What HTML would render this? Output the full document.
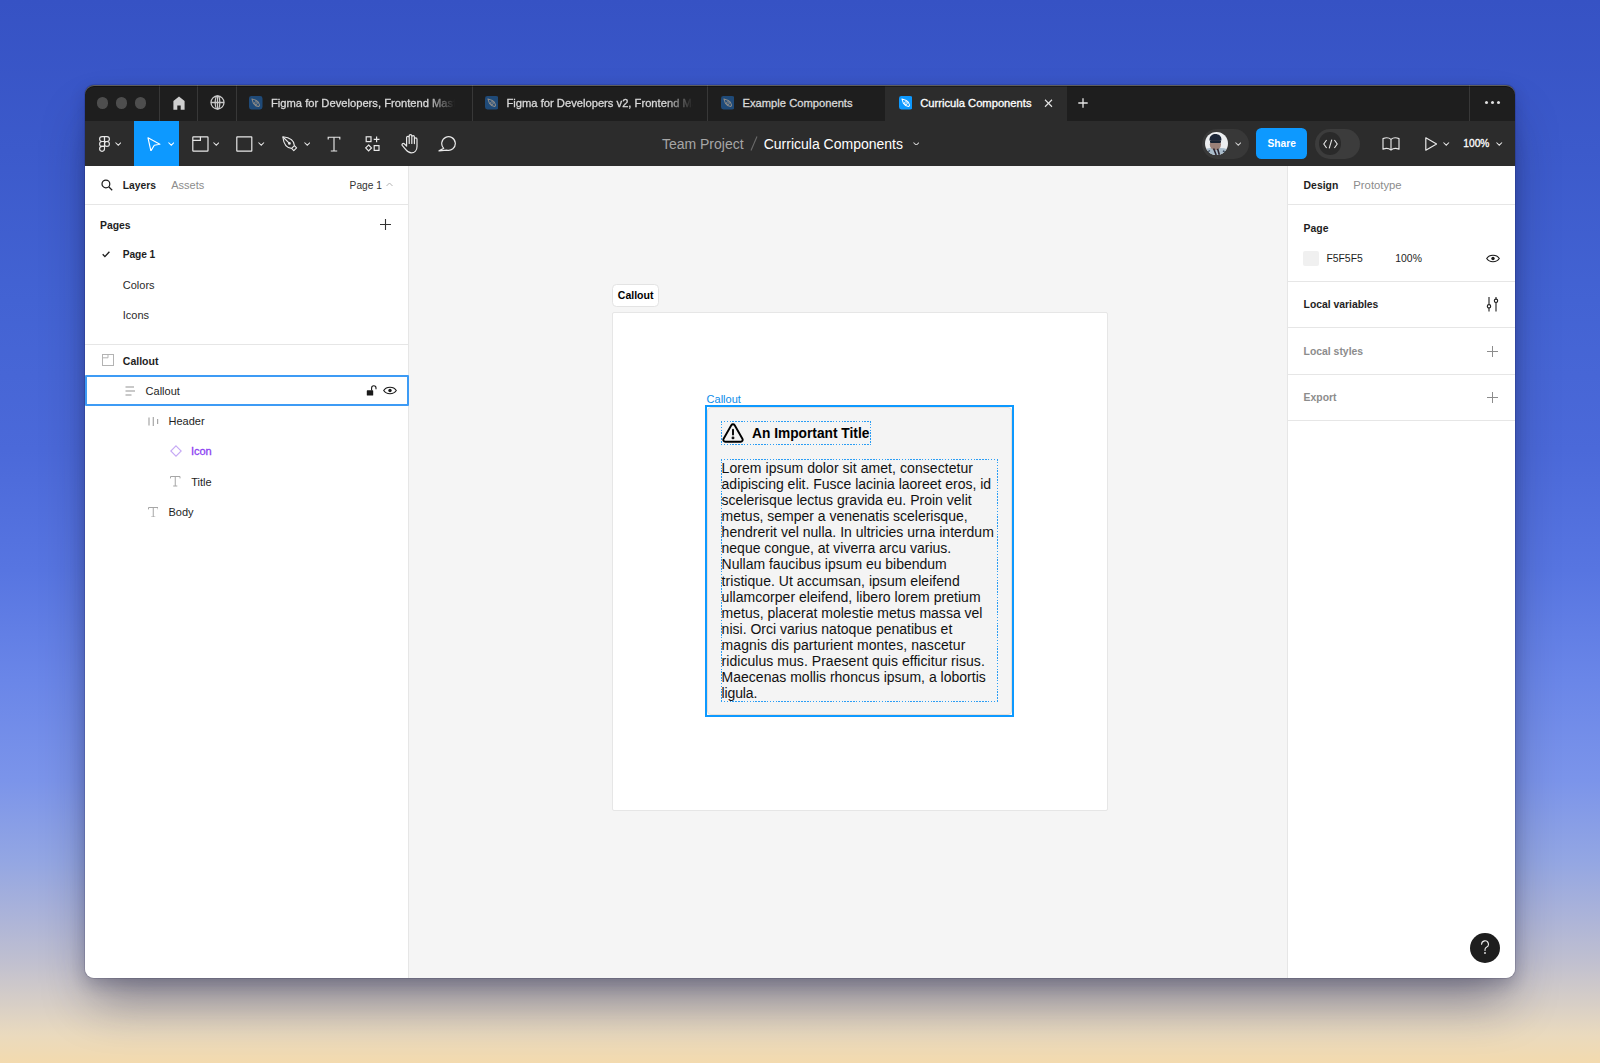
<!DOCTYPE html>
<html><head><meta charset="utf-8"><title>Figma</title>
<style>
html,body{margin:0;padding:0;width:1600px;height:1063px;overflow:hidden}
body{position:relative;font-family:"Liberation Sans",sans-serif;
background:linear-gradient(180deg,#3652c4 0px,#3c5acb 150px,#4363d3 300px,#4b69d9 450px,#5775e1 570px,#6a86e8 680px,#7b94ea 780px,#93a6e3 860px,#abb3d9 915px,#bfbfd0 960px,#d8cfc6 1005px,#eadabe 1035px,#f3daae 1063px)}
.abs{position:absolute;box-sizing:content-box}
.t{position:absolute;white-space:nowrap}
.fade{-webkit-mask-image:linear-gradient(90deg,#000 85%,transparent 100%);mask-image:linear-gradient(90deg,#000 85%,transparent 100%)}
#win{position:absolute;left:85px;top:85px;width:1430px;height:893px;border-radius:9px;overflow:hidden}
#hl{position:absolute;left:85px;top:85px;width:1430px;height:893px;border-radius:9px;box-shadow:inset 0 1px 0 rgba(255,255,255,0.32),inset 0 2px 0 rgba(0,0,0,0.35)}
#shadow{position:absolute;left:85px;top:85px;width:1430px;height:893px;border-radius:9px;box-shadow:0 0 0 1px rgba(0,0,40,0.12),0 6px 16px rgba(20,20,50,0.2),0 30px 50px -8px rgba(20,20,50,0.4)}
</style></head>
<body>
<div id="shadow"></div>
<div id="win"><div style="position:absolute;left:-85px;top:-85px;width:1600px;height:1063px">
<div class="abs" style="left:85px;top:85px;width:1430px;height:36px;background:#1e1e1e"></div>
<div class="abs" style="left:96.75px;top:97.05px;width:11.5px;height:11.5px;border-radius:50%;background:#4e4e4e"></div>
<div class="abs" style="left:115.55px;top:97.05px;width:11.5px;height:11.5px;border-radius:50%;background:#4e4e4e"></div>
<div class="abs" style="left:134.55px;top:97.05px;width:11.5px;height:11.5px;border-radius:50%;background:#4e4e4e"></div>
<div class="abs" style="left:159px;top:85px;width:1px;height:36px;background:#383838"></div>
<div class="abs" style="left:197px;top:85px;width:1px;height:36px;background:#383838"></div>
<div class="abs" style="left:236px;top:85px;width:1px;height:36px;background:#383838"></div>
<div class="abs" style="left:471.5px;top:85px;width:1px;height:36px;background:#383838"></div>
<div class="abs" style="left:707px;top:85px;width:1px;height:36px;background:#383838"></div>
<div class="abs" style="left:1469px;top:85px;width:1px;height:36px;background:#383838"></div>
<div class="abs" style="left:885px;top:86px;width:182px;height:35px;background:#2c2c2c"></div>
<svg class="abs" style="left:172.5px;top:96px" width="12" height="14" viewBox="0 0 12 14"><path d="M6 0.4 L11.6 5.0 V13.8 H7.7 V9.4 H4.3 V13.8 H0.4 V5.0 Z" fill="#cfcfcf"/></svg>
<svg class="abs" style="left:209.6px;top:95.4px" width="15" height="15" viewBox="0 0 15 15" fill="none" stroke="#c8c8c8" stroke-width="1.3"><circle cx="7.5" cy="7.5" r="6.5"/><ellipse cx="7.5" cy="7.5" rx="2.3" ry="6.5"/><line x1="0.9" y1="7.5" x2="14.1" y2="7.5"/><line x1="7.5" y1="0.9" x2="7.5" y2="14.1"/></svg>
<svg class="abs" style="left:249px;top:96px" width="13.5" height="13.5" viewBox="0 0 14 14"><rect width="14" height="14" rx="2.5" fill="#1f4a78"/><path d="M3.0 3.0 L7.6 4.6 C9.4 5.4 10.6 7.2 11.0 9.6 L10.0 11.0 C7.6 10.6 5.6 9.4 4.6 7.6 Z" fill="none" stroke="#8e8c88" stroke-width="1.05" stroke-linejoin="round"/><circle cx="7.2" cy="7.4" r="1.5" fill="none" stroke="#8e8c88" stroke-width="0.9"/><circle cx="7.2" cy="7.4" r="0.5" fill="#8e8c88"/></svg>
<svg class="abs" style="left:484.5px;top:96px" width="13.5" height="13.5" viewBox="0 0 14 14"><rect width="14" height="14" rx="2.5" fill="#1f4a78"/><path d="M3.0 3.0 L7.6 4.6 C9.4 5.4 10.6 7.2 11.0 9.6 L10.0 11.0 C7.6 10.6 5.6 9.4 4.6 7.6 Z" fill="none" stroke="#8e8c88" stroke-width="1.05" stroke-linejoin="round"/><circle cx="7.2" cy="7.4" r="1.5" fill="none" stroke="#8e8c88" stroke-width="0.9"/><circle cx="7.2" cy="7.4" r="0.5" fill="#8e8c88"/></svg>
<svg class="abs" style="left:720.5px;top:96px" width="13.5" height="13.5" viewBox="0 0 14 14"><rect width="14" height="14" rx="2.5" fill="#1f4a78"/><path d="M3.0 3.0 L7.6 4.6 C9.4 5.4 10.6 7.2 11.0 9.6 L10.0 11.0 C7.6 10.6 5.6 9.4 4.6 7.6 Z" fill="none" stroke="#8e8c88" stroke-width="1.05" stroke-linejoin="round"/><circle cx="7.2" cy="7.4" r="1.5" fill="none" stroke="#8e8c88" stroke-width="0.9"/><circle cx="7.2" cy="7.4" r="0.5" fill="#8e8c88"/></svg>
<svg class="abs" style="left:898.5px;top:96px" width="13.5" height="13.5" viewBox="0 0 14 14"><rect width="14" height="14" rx="2.5" fill="#0d99ff"/><path d="M3.0 3.0 L7.6 4.6 C9.4 5.4 10.6 7.2 11.0 9.6 L10.0 11.0 C7.6 10.6 5.6 9.4 4.6 7.6 Z" fill="none" stroke="#ffffff" stroke-width="1.05" stroke-linejoin="round"/><circle cx="7.2" cy="7.4" r="1.5" fill="none" stroke="#ffffff" stroke-width="0.9"/><circle cx="7.2" cy="7.4" r="0.5" fill="#ffffff"/></svg>
<div class="abs fade" style="left:271px;top:94px;width:184px;height:18px;overflow:hidden"><div class="t" style="left:0px;top:4.32px;font-size:11.2px;line-height:11.2px;color:#d9d9d9;font-weight:400;-webkit-text-stroke:0.3px currentColor">Figma for Developers, Frontend Masters</div></div>
<div class="abs fade" style="left:506.5px;top:94px;width:186px;height:18px;overflow:hidden"><div class="t" style="left:0px;top:4.32px;font-size:11.2px;line-height:11.2px;color:#d9d9d9;font-weight:400;-webkit-text-stroke:0.3px currentColor">Figma for Developers v2, Frontend Masters</div></div>
<div class="t" style="left:742.5px;top:98.32px;font-size:11.2px;line-height:11.2px;color:#d9d9d9;font-weight:400;-webkit-text-stroke:0.3px currentColor">Example Components</div>
<div class="t" style="left:920.2px;top:98.32px;font-size:11.2px;line-height:11.2px;color:#ffffff;font-weight:400;-webkit-text-stroke:0.3px currentColor">Curricula Components</div>
<svg class="abs" style="left:1043.5px;top:99px" width="9" height="8.5" viewBox="0 0 9 9" stroke="#e6e6e6" stroke-width="1.2"><line x1="0.8" y1="0.8" x2="8.2" y2="8.2"/><line x1="8.2" y1="0.8" x2="0.8" y2="8.2"/></svg>
<svg class="abs" style="left:1077.5px;top:98px" width="10" height="10" viewBox="0 0 10 10" stroke="#e6e6e6" stroke-width="1.3"><line x1="5" y1="0.3" x2="5" y2="9.7"/><line x1="0.3" y1="5" x2="9.7" y2="5"/></svg>
<div class="abs" style="left:1485.1000000000001px;top:101.2px;width:3.2px;height:3.2px;border-radius:50%;background:#e0e0e0"></div>
<div class="abs" style="left:1490.8000000000002px;top:101.2px;width:3.2px;height:3.2px;border-radius:50%;background:#e0e0e0"></div>
<div class="abs" style="left:1496.6000000000001px;top:101.2px;width:3.2px;height:3.2px;border-radius:50%;background:#e0e0e0"></div>
<div class="abs" style="left:85px;top:121px;width:1430px;height:45px;background:#2c2c2c"></div>
<div class="abs" style="left:134px;top:121px;width:45px;height:45px;background:#0d99ff"></div>
<svg class="abs" style="left:99.2px;top:135.6px" width="11" height="16" viewBox="0 0 11 16" fill="none" stroke="#e8e8e8" stroke-width="1.15"><path d="M3.05 0.6 H5.5 V5.5 H3.05 A2.45 2.45 0 0 1 3.05 0.6 Z"/><path d="M5.5 0.6 H7.95 A2.45 2.45 0 0 1 7.95 5.5 H5.5 Z"/><path d="M3.05 5.5 H5.5 V10.4 H3.05 A2.45 2.45 0 0 1 3.05 5.5 Z"/><circle cx="7.95" cy="7.95" r="2.45"/><path d="M5.5 10.4 V12.85 A2.45 2.45 0 1 1 3.05 10.4 Z"/></svg>
<svg class="abs" style="left:114.75px;top:142px" width="6.5" height="3.8" viewBox="0 0 7 4" fill="none" stroke="#e6e6e6" stroke-width="1.1"><path d="M0.5 0.5 L3.5 3.4 L6.5 0.5"/></svg>
<svg class="abs" style="left:147px;top:136.5px" width="14" height="14" viewBox="0 0 14 14" fill="none" stroke="#ffffff" stroke-width="1.15" stroke-linejoin="round"><path d="M1.0 0.8 L12.9 7.3 L7.3 8.3 L3.9 13.9 Z"/></svg>
<svg class="abs" style="left:167.5px;top:142px" width="6.5" height="3.8" viewBox="0 0 7 4" fill="none" stroke="#ffffff" stroke-width="1.1"><path d="M0.5 0.5 L3.5 3.4 L6.5 0.5"/></svg>
<svg class="abs" style="left:191.5px;top:135.5px" width="17" height="16" viewBox="0 0 17 16" fill="none" stroke="#e8e8e8" stroke-width="1.2"><rect x="0.8" y="0.8" width="15.2" height="14.4" rx="0.6"/><path d="M0.8 4.3 H8.4 V0.8"/></svg>
<svg class="abs" style="left:212.75px;top:142px" width="6.5" height="3.8" viewBox="0 0 7 4" fill="none" stroke="#e6e6e6" stroke-width="1.1"><path d="M0.5 0.5 L3.5 3.4 L6.5 0.5"/></svg>
<svg class="abs" style="left:236px;top:135.5px" width="17" height="16" viewBox="0 0 17 16" fill="none" stroke="#e8e8e8" stroke-width="1.2"><rect x="0.8" y="0.8" width="15" height="14.4" rx="0.4"/></svg>
<svg class="abs" style="left:258.25px;top:142px" width="6.5" height="3.8" viewBox="0 0 7 4" fill="none" stroke="#e6e6e6" stroke-width="1.1"><path d="M0.5 0.5 L3.5 3.4 L6.5 0.5"/></svg>
<svg class="abs" style="left:281.5px;top:135.5px" width="16" height="16" viewBox="0 0 16 16" fill="none" stroke="#e8e8e8" stroke-width="1.15" stroke-linejoin="round"><path d="M0.8 0.8 C7.4 1.6 12.2 4.0 12.4 9.6 L9.6 12.4 C4.0 12.2 1.6 7.4 0.8 0.8 Z"/><path d="M12.4 9.6 L14.6 11.8 L11.8 14.6 L9.6 12.4"/><path d="M1 1 L7.2 7.2"/><circle cx="7.4" cy="7.4" r="1.35" fill="#e8e8e8" stroke="none"/></svg>
<svg class="abs" style="left:303.75px;top:142px" width="6.5" height="3.8" viewBox="0 0 7 4" fill="none" stroke="#e6e6e6" stroke-width="1.1"><path d="M0.5 0.5 L3.5 3.4 L6.5 0.5"/></svg>
<svg class="abs" style="left:327px;top:135.5px" width="14" height="16" viewBox="0 0 14 16" fill="none" stroke="#e8e8e8" stroke-width="1.15"><path d="M1.2 3.6 V1.2 H12.8 V3.6"/><path d="M7 1.2 V15"/><path d="M3.8 15 H10.2"/></svg>
<svg class="abs" style="left:364.5px;top:135.5px" width="16" height="16" viewBox="0 0 16 16" fill="none" stroke="#e8e8e8" stroke-width="1.2"><rect x="1.2" y="0.8" width="4.8" height="4.8"/><path d="M11.6 0.4 V6.2 M8.7 3.3 H14.5"/><path d="M3.6 9.0 L6.5 11.9 L3.6 14.8 L0.7 11.9 Z"/><rect x="9.2" y="9.6" width="4.8" height="4.8"/></svg>
<svg class="abs" style="left:400.5px;top:133.5px" width="19" height="20" viewBox="0 0 19 20" fill="none" stroke="#e8e8e8" stroke-width="1.2" stroke-linejoin="round" stroke-linecap="round"><path d="M5.6 11.2 V3.6 A1.3 1.3 0 0 1 8.2 3.6 V9.4 M8.2 9.4 V1.9 A1.3 1.3 0 0 1 10.8 1.9 V9.4 M10.8 9.4 V3.0 A1.3 1.3 0 0 1 13.4 3.0 V9.6 M13.4 9.6 V5.2 A1.3 1.3 0 0 1 16.0 5.2 V12.4 C16.0 16.4 13.6 18.8 10.4 18.8 C7.6 18.8 6.2 17.4 4.8 15.6 L1.2 11.4 A1.3 1.3 0 0 1 3.2 9.8 L5.6 12.0"/></svg>
<svg class="abs" style="left:438px;top:135.5px" width="18" height="16" viewBox="0 0 18 16" fill="none" stroke="#e8e8e8" stroke-width="1.2" stroke-linejoin="round"><path d="M5.7 12.3 A6.8 6.8 0 1 1 8.74 14.07 L1.0 14.9 Z"/></svg>
<div class="t" style="left:661.9px;top:136.75px;font-size:14px;line-height:14px;color:#a6a6a6;font-weight:400;">Team Project</div>
<svg class="abs" style="left:749.5px;top:136px" width="8" height="15" viewBox="0 0 8 15" stroke="#6a6a6a" stroke-width="1.1"><line x1="7" y1="0.5" x2="1" y2="14.5"/></svg>
<div class="t" style="left:763.7px;top:136.75px;font-size:14px;line-height:14px;color:#ffffff;font-weight:400;">Curricula Components</div>
<svg class="abs" style="left:912.5px;top:141.6px" width="6.5" height="3.8" viewBox="0 0 7 4" fill="none" stroke="#d0d0d0" stroke-width="1.1"><path d="M0.5 0.5 L3.5 3.4 L6.5 0.5"/></svg>
<div class="abs" style="left:1202px;top:128.5px;width:46.5px;height:30px;border-radius:15px;background:#383838"></div>
<svg class="abs" style="left:1204.9px;top:131.9px" width="23" height="23" viewBox="0 0 23 23"><defs><clipPath id="av"><circle cx="11.5" cy="11.5" r="11.5"/></clipPath></defs><g clip-path="url(#av)"><rect width="23" height="23" fill="#eceef0"/><path d="M0 23 L1 17 C4 15.5 8 15.8 11 16.5 C15 15.8 19 16 23 17.5 V23Z" fill="#a9bccb"/><ellipse cx="10.4" cy="12.4" rx="5.6" ry="5.8" fill="#9c8078"/><path d="M4.4 8.4 C4.2 3.8 7.8 2.0 10.4 2.0 C13.6 2.0 16.8 4.0 16.4 8.4 Z" fill="#1c2638"/><rect x="5" y="8.2" width="11" height="2.8" rx="1.2" fill="#1a2232"/><path d="M8.6 16.5 L11.2 23 M12.6 16.8 L14.4 23" stroke="#2c2430" stroke-width="1.6"/><path d="M1 21 L5 18.5 M18 19 L22 21" stroke="#3b4a5e" stroke-width="1.4"/></g></svg>
<svg class="abs" style="left:1234.75px;top:142px" width="6.5" height="3.8" viewBox="0 0 7 4" fill="none" stroke="#d0d0d0" stroke-width="1.1"><path d="M0.5 0.5 L3.5 3.4 L6.5 0.5"/></svg>
<div class="abs" style="left:1256px;top:128px;width:51px;height:30.5px;border-radius:5.5px;background:#0d99ff"></div>
<div class="t" style="left:1267.5px;top:139.37px;font-size:10.2px;line-height:10.2px;color:#ffffff;font-weight:700;">Share</div>
<div class="abs" style="left:1315px;top:128.5px;width:45px;height:30px;border-radius:15px;background:#3c3c3c"></div>
<div class="abs" style="left:1318.75px;top:132.25px;width:22.5px;height:22.5px;border-radius:50%;background:#2a2a2a"></div>
<svg class="abs" style="left:1322.5px;top:138.5px" width="15" height="10" viewBox="0 0 15 10" fill="none" stroke="#e6e6e6" stroke-width="1.1"><path d="M3.6 1 L0.8 5 L3.6 9"/><path d="M11.4 1 L14.2 5 L11.4 9"/><path d="M8.8 0.6 L6.2 9.4"/></svg>
<svg class="abs" style="left:1381.5px;top:136.5px" width="18" height="14" viewBox="0 0 18 14" fill="none" stroke="#e8e8e8" stroke-width="1.15" stroke-linejoin="round"><path d="M9 2.4 C7 0.6 3.4 0.6 1 1.6 V12.2 C3.4 11.2 7 11.4 9 13 C11 11.4 14.6 11.2 17 12.2 V1.6 C14.6 0.6 11 0.6 9 2.4 Z"/><path d="M9 2.4 V13"/></svg>
<svg class="abs" style="left:1424.5px;top:136.5px" width="12.5" height="14" viewBox="0 0 12.5 14" fill="none" stroke="#e8e8e8" stroke-width="1.2" stroke-linejoin="round"><path d="M0.8 0.8 L11.6 7 L0.8 13.2 Z"/></svg>
<svg class="abs" style="left:1443px;top:141.8px" width="6.5" height="3.8" viewBox="0 0 7 4" fill="none" stroke="#e6e6e6" stroke-width="1.1"><path d="M0.5 0.5 L3.5 3.4 L6.5 0.5"/></svg>
<div class="t" style="left:1463.3px;top:139.47px;font-size:10.2px;line-height:10.2px;color:#ffffff;font-weight:400;-webkit-text-stroke:0.3px currentColor">100%</div>
<svg class="abs" style="left:1496px;top:141.8px" width="6.5" height="3.8" viewBox="0 0 7 4" fill="none" stroke="#e6e6e6" stroke-width="1.1"><path d="M0.5 0.5 L3.5 3.4 L6.5 0.5"/></svg>
<div class="abs" style="left:85px;top:166px;width:323px;height:812px;background:#ffffff"></div>
<div class="abs" style="left:408px;top:166px;width:1px;height:812px;background:#e6e6e6"></div>
<div class="abs" style="left:85px;top:204px;width:323px;height:1px;background:#e6e6e6"></div>
<div class="abs" style="left:85px;top:344px;width:323px;height:1px;background:#e6e6e6"></div>
<svg class="abs" style="left:101px;top:179px" width="12" height="12" viewBox="0 0 12 12" fill="none" stroke="#1e1e1e" stroke-width="1.25"><circle cx="4.9" cy="4.9" r="3.9"/><line x1="7.7" y1="7.7" x2="11.2" y2="11.2"/></svg>
<div class="t" style="left:122.8px;top:181.08px;font-size:10.3px;line-height:10.3px;color:#1e1e1e;font-weight:700;">Layers</div>
<div class="t" style="left:171.2px;top:180.49px;font-size:11px;line-height:11px;color:#8c8c8c;font-weight:400;">Assets</div>
<div class="t" style="left:349.6px;top:181.17px;font-size:10.2px;line-height:10.2px;color:#333333;font-weight:400;">Page 1</div>
<svg class="abs" style="left:385.5px;top:181.7px" width="7" height="4.5" viewBox="0 0 7 4.5" fill="none" stroke="#b3b3b3" stroke-width="1"><path d="M0.5 4 L3.5 1 L6.5 4"/></svg>
<div class="t" style="left:100px;top:220.50px;font-size:10.4px;line-height:10.4px;color:#1e1e1e;font-weight:700;">Pages</div>
<svg class="abs" style="left:380px;top:218.5px" width="11" height="11" viewBox="0 0 11 11" stroke="#333" stroke-width="1.1"><line x1="5.5" y1="0" x2="5.5" y2="11"/><line x1="0" y1="5.5" x2="11" y2="5.5"/></svg>
<svg class="abs" style="left:101.5px;top:251px" width="8" height="6.5" viewBox="0 0 8 6.5" fill="none" stroke="#1e1e1e" stroke-width="1.35"><path d="M0.7 3.3 L2.9 5.6 L7.4 0.8"/></svg>
<div class="t" style="left:122.8px;top:250.17px;font-size:10.2px;line-height:10.2px;color:#1e1e1e;font-weight:700;letter-spacing:-0.1px">Page 1</div>
<div class="t" style="left:122.8px;top:279.79px;font-size:11px;line-height:11px;color:#2a2a2a;font-weight:400;">Colors</div>
<div class="t" style="left:122.8px;top:310.19px;font-size:11px;line-height:11px;color:#2a2a2a;font-weight:400;">Icons</div>
<svg class="abs" style="left:101.5px;top:354px" width="12" height="12" viewBox="0 0 12 12" fill="none" stroke="#b3b3b3" stroke-width="1"><rect x="0.5" y="0.5" width="11" height="11"/><path d="M0.5 3.8 H6 V0.5"/></svg>
<div class="t" style="left:122.8px;top:355.71px;font-size:10.5px;line-height:10.5px;color:#1e1e1e;font-weight:700;">Callout</div>
<div class="abs" style="left:85px;top:375px;width:319.5px;height:27px;border:2px solid #3d9bf5;border-radius:1px"></div>
<svg class="abs" style="left:124.5px;top:385.5px" width="10.5" height="10" viewBox="0 0 10.5 10" stroke="#a6a6a6" stroke-width="1.2"><line x1="0.5" y1="1" x2="9" y2="1"/><line x1="0.5" y1="5" x2="10" y2="5"/><line x1="0.5" y1="9" x2="6.5" y2="9"/></svg>
<div class="t" style="left:145.6px;top:385.89px;font-size:11px;line-height:11px;color:#1e1e1e;font-weight:400;">Callout</div>
<svg class="abs" style="left:366px;top:384.5px" width="11" height="11" viewBox="0 0 11 11"><rect x="0.8" y="5.3" width="6.4" height="5.3" rx="0.6" fill="#1a1a1a"/><path d="M5.6 5.4 V3.0 A2.2 2.2 0 0 1 10 3.0 V4.2" fill="none" stroke="#1a1a1a" stroke-width="1.1"/></svg>
<svg class="abs" style="left:382.5px;top:386px" width="14" height="9" viewBox="0 0 14 9"><path d="M0.7 4.5 C3.4 0.2 10.6 0.2 13.3 4.5 C10.6 8.8 3.4 8.8 0.7 4.5 Z" fill="none" stroke="#1a1a1a" stroke-width="1.1"/><circle cx="7" cy="4.5" r="1.7" fill="#1a1a1a"/></svg>
<svg class="abs" style="left:147.5px;top:416.5px" width="11" height="9" viewBox="0 0 11 9" stroke="#a6a6a6" stroke-width="1.2"><line x1="1" y1="0.5" x2="1" y2="8.5"/><line x1="5.3" y1="0" x2="5.3" y2="9"/><line x1="9.6" y1="2" x2="9.6" y2="7"/></svg>
<div class="t" style="left:168.5px;top:416.49px;font-size:11px;line-height:11px;color:#1e1e1e;font-weight:400;">Header</div>
<svg class="abs" style="left:169.5px;top:445px" width="12" height="12" viewBox="0 0 12 12" fill="none" stroke="#c5a8f5" stroke-width="1.1"><path d="M6 0.8 L11.2 6 L6 11.2 L0.8 6 Z"/></svg>
<div class="t" style="left:190.9px;top:446.49px;font-size:11px;line-height:11px;color:#8b3ef2;font-weight:400;-webkit-text-stroke:0.3px currentColor">Icon</div>
<svg class="abs" style="left:170px;top:476px" width="10.5" height="10.5" viewBox="0 0 10.5 10.5" fill="none" stroke="#a6a6a6" stroke-width="1"><path d="M0.5 2.4 V0.5 H10 V2.4 M5.25 0.5 V10 M3.2 10 H7.3"/></svg>
<div class="t" style="left:191.2px;top:476.99px;font-size:11px;line-height:11px;color:#1e1e1e;font-weight:400;">Title</div>
<svg class="abs" style="left:147.7px;top:506.5px" width="10.5" height="10.5" viewBox="0 0 10.5 10.5" fill="none" stroke="#a6a6a6" stroke-width="1"><path d="M0.5 2.4 V0.5 H10 V2.4 M5.25 0.5 V10 M3.2 10 H7.3"/></svg>
<div class="t" style="left:168.5px;top:507.29px;font-size:11px;line-height:11px;color:#1e1e1e;font-weight:400;">Body</div>
<div class="abs" style="left:409px;top:166px;width:878px;height:812px;background:#f5f5f5"></div>
<div class="abs" style="left:612px;top:283.5px;width:45px;height:21.5px;border:1px solid #e3e3e3;border-radius:4.5px;background:#ffffff"></div>
<div class="t" style="left:617.8px;top:289.91px;font-size:10.5px;line-height:10.5px;color:#000000;font-weight:700;">Callout</div>
<div class="abs" style="left:612px;top:312px;width:494px;height:497px;border:1px solid #e6e6e6;border-radius:2px;background:#ffffff"></div>
<div class="t" style="left:706.6px;top:393.69px;font-size:11px;line-height:11px;color:#0c8ce9;font-weight:400;">Callout</div>
<div class="abs" style="left:707px;top:407px;width:303px;height:306px;border:1px solid #e8e0d8;border-radius:4px;background:#f4f4f4"></div>
<div class="abs" style="left:705px;top:405px;width:305px;height:308px;border:2px solid #0d99ff"></div>
<div class="abs" style="left:721px;top:421px;width:149.5px;height:1px;background:repeating-linear-gradient(90deg,#2a9df4 0 1.5px,transparent 1.5px 2.87px)"></div>
<div class="abs" style="left:721px;top:443.5px;width:149.5px;height:1px;background:repeating-linear-gradient(90deg,#2a9df4 0 1.5px,transparent 1.5px 2.87px)"></div>
<div class="abs" style="left:721px;top:421px;width:1px;height:23.5px;background:repeating-linear-gradient(180deg,#2a9df4 0 1.5px,transparent 1.5px 2.87px)"></div>
<div class="abs" style="left:869.5px;top:421px;width:1px;height:23.5px;background:repeating-linear-gradient(180deg,#2a9df4 0 1.5px,transparent 1.5px 2.87px)"></div>
<div class="abs" style="left:721px;top:459px;width:277px;height:1px;background:repeating-linear-gradient(90deg,#2a9df4 0 1.5px,transparent 1.5px 2.87px)"></div>
<div class="abs" style="left:721px;top:700.5px;width:277px;height:1px;background:repeating-linear-gradient(90deg,#2a9df4 0 1.5px,transparent 1.5px 2.87px)"></div>
<div class="abs" style="left:721px;top:459px;width:1px;height:242.5px;background:repeating-linear-gradient(180deg,#2a9df4 0 1.5px,transparent 1.5px 2.87px)"></div>
<div class="abs" style="left:997px;top:459px;width:1px;height:242.5px;background:repeating-linear-gradient(180deg,#2a9df4 0 1.5px,transparent 1.5px 2.87px)"></div>
<svg class="abs" style="left:721.5px;top:423px" width="22" height="20" viewBox="0 0 22 20" fill="none" stroke="#000" stroke-width="1.9" stroke-linejoin="round"><path d="M9.3 2.2 A2 2 0 0 1 12.7 2.2 L20.4 15.8 A2 2 0 0 1 18.7 18.8 H3.3 A2 2 0 0 1 1.6 15.8 Z"/><path d="M11 6.8 V11.6" stroke-linecap="round"/><circle cx="11" cy="14.9" r="0.5" fill="#000"/></svg>
<div class="t" style="left:752px;top:427.36px;font-size:13.75px;line-height:13.75px;color:#000000;font-weight:700;">An Important Title</div>
<div class="t" style="left:721.6px;top:461.25px;font-size:14px;line-height:14px;color:#111111;font-weight:400;letter-spacing:0.063px">Lorem ipsum dolor sit amet, consectetur</div>
<div class="t" style="left:721.6px;top:477.29px;font-size:14px;line-height:14px;color:#111111;font-weight:400;letter-spacing:-0.012px">adipiscing elit. Fusce lacinia laoreet eros, id</div>
<div class="t" style="left:721.6px;top:493.33px;font-size:14px;line-height:14px;color:#111111;font-weight:400;letter-spacing:0.007px">scelerisque lectus gravida eu. Proin velit</div>
<div class="t" style="left:721.6px;top:509.37px;font-size:14px;line-height:14px;color:#111111;font-weight:400;letter-spacing:-0.019px">metus, semper a venenatis scelerisque,</div>
<div class="t" style="left:721.6px;top:525.41px;font-size:14px;line-height:14px;color:#111111;font-weight:400;letter-spacing:0.014px">hendrerit vel nulla. In ultricies urna interdum</div>
<div class="t" style="left:721.6px;top:541.45px;font-size:14px;line-height:14px;color:#111111;font-weight:400;letter-spacing:-0.021px">neque congue, at viverra arcu varius.</div>
<div class="t" style="left:721.6px;top:557.49px;font-size:14px;line-height:14px;color:#111111;font-weight:400;letter-spacing:-0.018px">Nullam faucibus ipsum eu bibendum</div>
<div class="t" style="left:721.6px;top:573.53px;font-size:14px;line-height:14px;color:#111111;font-weight:400;letter-spacing:0.042px">tristique. Ut accumsan, ipsum eleifend</div>
<div class="t" style="left:721.6px;top:589.57px;font-size:14px;line-height:14px;color:#111111;font-weight:400;letter-spacing:0.035px">ullamcorper eleifend, libero lorem pretium</div>
<div class="t" style="left:721.6px;top:605.61px;font-size:14px;line-height:14px;color:#111111;font-weight:400;letter-spacing:0.006px">metus, placerat molestie metus massa vel</div>
<div class="t" style="left:721.6px;top:621.65px;font-size:14px;line-height:14px;color:#111111;font-weight:400;letter-spacing:0.009px">nisi. Orci varius natoque penatibus et</div>
<div class="t" style="left:721.6px;top:637.69px;font-size:14px;line-height:14px;color:#111111;font-weight:400;letter-spacing:0.067px">magnis dis parturient montes, nascetur</div>
<div class="t" style="left:721.6px;top:653.73px;font-size:14px;line-height:14px;color:#111111;font-weight:400;letter-spacing:0.046px">ridiculus mus. Praesent quis efficitur risus.</div>
<div class="t" style="left:721.6px;top:669.77px;font-size:14px;line-height:14px;color:#111111;font-weight:400;letter-spacing:0.010px">Maecenas mollis rhoncus ipsum, a lobortis</div>
<div class="t" style="left:721.6px;top:685.81px;font-size:14px;line-height:14px;color:#111111;font-weight:400;letter-spacing:-0.149px">ligula.</div>
<div class="abs" style="left:1287px;top:166px;width:1px;height:812px;background:#e6e6e6"></div>
<div class="abs" style="left:1288px;top:166px;width:227px;height:812px;background:#ffffff"></div>
<div class="abs" style="left:1288px;top:204px;width:227px;height:1px;background:#e6e6e6"></div>
<div class="abs" style="left:1288px;top:281px;width:227px;height:1px;background:#e6e6e6"></div>
<div class="abs" style="left:1288px;top:327px;width:227px;height:1px;background:#e6e6e6"></div>
<div class="abs" style="left:1288px;top:373.5px;width:227px;height:1px;background:#e6e6e6"></div>
<div class="abs" style="left:1288px;top:420px;width:227px;height:1px;background:#e6e6e6"></div>
<div class="t" style="left:1303.6px;top:181.00px;font-size:10.4px;line-height:10.4px;color:#1e1e1e;font-weight:700;">Design</div>
<div class="t" style="left:1353.3px;top:180.23px;font-size:11.3px;line-height:11.3px;color:#8c8c8c;font-weight:400;">Prototype</div>
<div class="t" style="left:1303.6px;top:223.70px;font-size:10.4px;line-height:10.4px;color:#1e1e1e;font-weight:700;">Page</div>
<div class="abs" style="left:1303px;top:250.5px;width:15.5px;height:15px;border-radius:2px;background:#f0f0f0"></div>
<div class="t" style="left:1326.4px;top:253.80px;font-size:10.4px;line-height:10.4px;color:#1e1e1e;font-weight:400;">F5F5F5</div>
<div class="t" style="left:1395.3px;top:254.00px;font-size:10.4px;line-height:10.4px;color:#1e1e1e;font-weight:400;">100%</div>
<svg class="abs" style="left:1486px;top:254px" width="14" height="9" viewBox="0 0 14 9"><path d="M0.7 4.5 C3.4 0.2 10.6 0.2 13.3 4.5 C10.6 8.8 3.4 8.8 0.7 4.5 Z" fill="none" stroke="#1a1a1a" stroke-width="1.1"/><circle cx="7" cy="4.5" r="1.7" fill="#1a1a1a"/></svg>
<div class="t" style="left:1303.6px;top:300.24px;font-size:10.35px;line-height:10.35px;color:#1e1e1e;font-weight:700;">Local variables</div>
<svg class="abs" style="left:1486px;top:297px" width="13" height="14.5" viewBox="0 0 13 14.5" fill="none" stroke="#1e1e1e" stroke-width="1.1"><path d="M3 0 V7.6 M3 11 V14.5 M10 0 V2 M10 5.6 V14.5"/><circle cx="3" cy="9.3" r="1.7"/><circle cx="10" cy="3.8" r="1.7"/></svg>
<div class="t" style="left:1303.6px;top:346.90px;font-size:10.4px;line-height:10.4px;color:#8c8c8c;font-weight:700;">Local styles</div>
<svg class="abs" style="left:1487px;top:345.5px" width="11" height="11" viewBox="0 0 11 11" stroke="#8c8c8c" stroke-width="1"><line x1="5.5" y1="0" x2="5.5" y2="11"/><line x1="0" y1="5.5" x2="11" y2="5.5"/></svg>
<div class="t" style="left:1303.6px;top:393.00px;font-size:10.4px;line-height:10.4px;color:#8c8c8c;font-weight:700;">Export</div>
<svg class="abs" style="left:1487px;top:392px" width="11" height="11" viewBox="0 0 11 11" stroke="#8c8c8c" stroke-width="1"><line x1="5.5" y1="0" x2="5.5" y2="11"/><line x1="0" y1="5.5" x2="11" y2="5.5"/></svg>
<div class="abs" style="left:1470px;top:932.5px;width:30px;height:30px;border-radius:50%;background:#1e1e1e"></div>
<svg class="abs" style="left:1480px;top:940px" width="10" height="15" viewBox="0 0 10 15" fill="none" stroke="#f0f0f0" stroke-width="1.1" stroke-linecap="round"><path d="M1.6 4.2 A3.4 3.4 0 1 1 6.4 7.3 C5.4 7.9 5 8.6 5 9.8 V10.4"/><circle cx="5" cy="13" r="0.35" fill="#f0f0f0"/></svg>
</div></div>
<div id="hl"></div>
</body></html>
